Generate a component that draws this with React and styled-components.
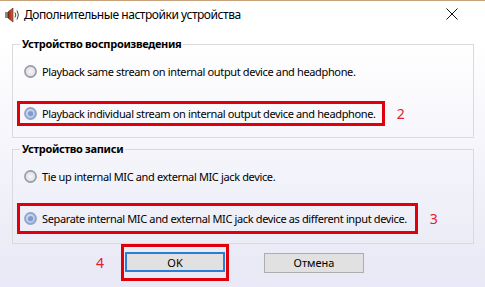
import styled, { createGlobalStyle } from 'styled-components'

const GlobalStyle = createGlobalStyle`
    html, body {
        margin: 0;
        padding: 0;
    }
    body {
        font-family: "Noto Sans", "Open Sans", sans-serif;
        font-size: 11px;
        letter-spacing: -0.36px;
        color: #000;
    }
`

const playback = [
    { id: 'same', text: 'Playback same stream on internal output device and headphone.' },
    { id: 'individual', text: 'Playback individual stream on internal output device and headphone.', checked: true, mark: '2' },
]

const record = [
    { id: 'tie', text: 'Tie up internal MIC and external MIC jack device.' },
    { id: 'separate', text: 'Separate internal MIC and external MIC jack device as different input device.', checked: true, mark: '3', tall: true },
]

function SpeakerIcon() {
    return (
        <svg width="17" height="16" viewBox="0 0 17 16">
            <defs>
                <linearGradient id="cone" x1="0" y1="0" x2="1" y2="0">
                    <stop offset="0" stopColor="#7a2a18" />
                    <stop offset="1" stopColor="#d9603a" />
                </linearGradient>
            </defs>
            <rect x="1" y="5" width="3" height="6" fill="#8a8a8a" />
            <path d="M4 5 L9 1 L9 15 L4 11 Z" fill="url(#cone)" stroke="#5a2010" strokeWidth="0.6" />
            <path d="M11 5.5 Q12.6 8 11 10.5" fill="none" stroke="#444" strokeWidth="1" />
            <path d="M13 3.5 Q15.8 8 13 12.5" fill="none" stroke="#444" strokeWidth="1" />
        </svg>
    )
}

function CloseIcon() {
    return (
        <svg width="12" height="12" viewBox="0 0 12 12">
            <path d="M0.5 0.5 L11.5 11.5 M11.5 0.5 L0.5 11.5" stroke="#111" strokeWidth="1" />
        </svg>
    )
}

function Radio({ checked }) {
    return (
        <RadioSvg width="13" height="13" viewBox="0 0 13 13">
            <defs>
                <radialGradient id="rOff" cx="0.5" cy="0.5" r="0.5">
                    <stop offset="0" stopColor="#f6f6f6" />
                    <stop offset="1" stopColor="#dcdce2" />
                </radialGradient>
                <radialGradient id="rOn" cx="0.45" cy="0.45" r="0.55">
                    <stop offset="0" stopColor="#e6eefb" />
                    <stop offset="1" stopColor="#9fb4dc" />
                </radialGradient>
            </defs>
            <circle cx="6.5" cy="6.5" r="5.6" fill={checked ? 'url(#rOn)' : 'url(#rOff)'} stroke={checked ? '#90a2c6' : '#9a9aa6'} strokeWidth="1.6" />
            {checked && <circle cx="6.5" cy="6.5" r="2.6" fill="#7f9ad0" />}
        </RadioSvg>
    )
}

function Option({ data }) {
    return (
        <OptionRow>
            <OptionBox marked={!!data.mark} tall={data.tall}>
                <Radio checked={data.checked} />
                <span>{data.text}</span>
            </OptionBox>
            {data.mark && <Mark>{data.mark}</Mark>}
        </OptionRow>
    )
}

function Group({ title, items, second }) {
    return (
        <GroupBox second={second}>
            <legend>{title}</legend>
            <Options second={second}>
                {items.map((item) => <Option key={item.id} data={item} />)}
            </Options>
        </GroupBox>
    )
}

export default function App() {
    return (
        <>
            <GlobalStyle />
            <Window>
                <TitleBar>
                    <TitleIcon><SpeakerIcon /></TitleIcon>
                    <Title>Дополнительные настройки устройства</Title>
                    <CloseButton><CloseIcon /></CloseButton>
                </TitleBar>
                <Body>
                    <Group title="Устройство воспроизведения" items={playback} />
                    <Group title="Устройство записи" items={record} second />
                    <Buttons>
                        <Mark>4</Mark>
                        <Highlight>
                            <Button primary>OK</Button>
                        </Highlight>
                        <Button>Отмена</Button>
                    </Buttons>
                </Body>
            </Window>
        </>
    )
}

const Window = styled.div`
    width: 485px;
    height: 287px;
    box-sizing: border-box;
    border-top: 1px solid #c8a27c;
    background: linear-gradient(to bottom, #ffffff 0px, #ffffff 40px, #e8e8f6 287px);
    display: flex;
    flex-direction: column;
    overflow: hidden;
`

const TitleBar = styled.div`
    height: 29px;
    display: flex;
    align-items: center;
    padding-left: 4px;
`

const TitleIcon = styled.div`
    width: 17px;
    height: 16px;
    display: flex;
    margin-top: -1px;
`

const Title = styled.div`
    margin-left: 3px;
    font-size: 12px;
    letter-spacing: -0.45px;
    flex: 1;
    margin-top: -2px;
`

const CloseButton = styled.div`
    width: 46px;
    height: 29px;
    display: flex;
    align-items: center;
    justify-content: center;
    margin-right: 10px;
    margin-top: -4px;
`

const Body = styled.div`
    display: flex;
    flex-direction: column;
`

const GroupBox = styled.fieldset`
    margin: ${props => props.second ? '3px' : '6px'} 11px 0 12px;
    padding: 0 0 ${props => props.second ? '9px' : '11px'} 4px;
    border: 1px solid #d9d9de;
    min-width: 0;

    legend {
        margin-left: 3px;
        padding: 0 2px;
        font-weight: bold;
        font-size: 11px;
        letter-spacing: -0.3px;
        line-height: 16px;
    }
`

const Options = styled.div`
    display: flex;
    flex-direction: column;
    align-items: flex-start;
    padding-top: 7px;
    gap: ${props => props.second ? '14px' : '17px'};
`

const OptionRow = styled.div`
    display: flex;
    align-items: center;
`

const OptionBox = styled.div`
    display: flex;
    align-items: center;
    gap: 5px;
    border: 3px solid ${props => props.marked ? '#e0000c' : 'transparent'};
    padding: ${props => props.tall ? '5px 8px 5px 4px' : '2px 6px 2px 4px'};
    line-height: 15px;
    white-space: nowrap;
`

const RadioSvg = styled.svg`
    flex: none;
`

const Mark = styled.span`
    color: #e0202a;
    font-size: 14px;
    letter-spacing: 0;
    margin-left: 12px;
    line-height: 16px;
`

const Buttons = styled.div`
    display: flex;
    align-items: center;
    padding-left: 96px;

    ${Mark} {
        margin: 0 17px 0 0;
    }
`

const Highlight = styled.div`
    border: 3px solid #e0000c;
    padding: 5px 1px 6px;
    margin-right: 35px;
    display: flex;
`

const Button = styled.button`
    width: 100px;
    height: 20px;
    box-sizing: border-box;
    background: #e1e1e1;
    border: ${props => props.primary ? '2px solid #2a7fd4' : '1px solid #adadad'};
    font-family: "Noto Sans", "Open Sans", sans-serif;
    font-size: 11px;
    font-weight: 400;
    letter-spacing: 0;
    color: #000;
    padding: 0;
`
